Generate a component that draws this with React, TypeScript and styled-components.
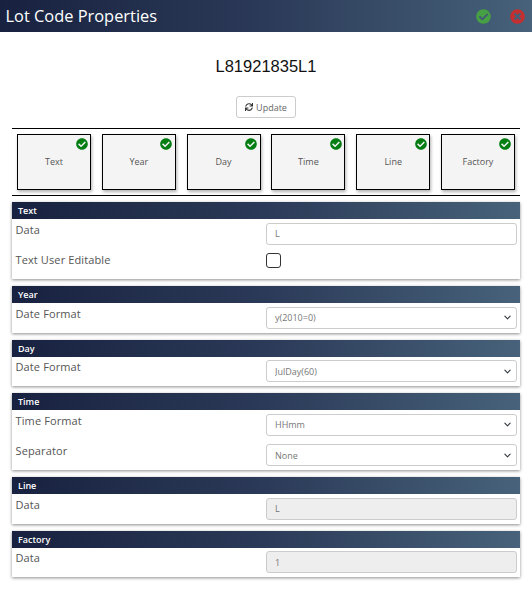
import * as React from 'react';
import styled, { createGlobalStyle } from 'styled-components';
import { FaCheckCircle, FaTimesCircle, FaSync } from 'react-icons/fa';

const barGradient = 'linear-gradient(90deg, #182240 0%, #2b3a58 50%, #47627a 100%)';
const chevron = `url("data:image/svg+xml,%3csvg xmlns='http://www.w3.org/2000/svg' viewBox='0 0 16 16'%3e%3cpath fill='none' stroke='%23343a40' stroke-linecap='round' stroke-linejoin='round' stroke-width='2.6' d='M2 5l6 6 6-6'/%3e%3c/svg%3e")`;

const GlobalStyle = createGlobalStyle`
  html, body {
    margin: 0;
    padding: 0;
    background: #fff;
    font-family: "Open Sans", sans-serif;
  }
`;

const Page = styled.div`
  width: 532px;
  height: 596px;
  overflow: hidden;
`;

const TitleBar = styled.div`
  display: flex;
  align-items: center;
  box-sizing: border-box;
  height: 32px;
  padding: 0 7px 0 5.5px;
  background: ${barGradient};
`;

const Title = styled.h1`
  flex: 1;
  margin: 0 0 2px;
  font-size: 16.4px;
  font-weight: 400;
  color: #fff;
`;

const TitleIcon = styled.span<{ $color: string }>`
  display: flex;
  margin-left: 19px;
  font-size: 15px;
  color: ${({ $color }) => $color};
`;

const Code = styled.div`
  margin-top: 24px;
  height: 20px;
  line-height: 20px;
  text-align: center;
  font-family: "Liberation Sans", Arial, sans-serif;
  font-size: 16.5px;
  color: #111;
`;

const UpdateRow = styled.div`
  display: flex;
  justify-content: center;
  margin-top: 20px;
`;

const UpdateButton = styled.button`
  display: flex;
  align-items: center;
  justify-content: center;
  gap: 3px;
  width: 60px;
  height: 22px;
  padding: 0;
  background: #fff;
  border: 1px solid #ccc;
  border-radius: 3px;
  font-family: inherit;
  font-size: 9px;
  color: #666;

  svg {
    font-size: 8px;
    color: #333;
  }
`;

const TileStrip = styled.div`
  display: flex;
  justify-content: space-between;
  box-sizing: border-box;
  height: 68px;
  margin: 10px 12px 0;
  padding: 5px 5px 0;
  border-top: 1px solid #000;
  border-bottom: 1px solid #000;
`;

const Tile = styled.div`
  position: relative;
  display: flex;
  align-items: center;
  justify-content: center;
  box-sizing: border-box;
  width: 74px;
  height: 56px;
  padding-bottom: 1px;
  background: #f4f4f4;
  border: 1.5px solid #000;
  box-shadow: 1px 2px 3px rgba(0, 0, 0, 0.3);
  font-size: 9px;
  color: #555;
`;

const TileCheck = styled.span`
  position: absolute;
  top: 3px;
  right: 2.5px;
  display: flex;
  font-size: 12px;
  color: #047d12;
`;

const PanelList = styled.div`
  display: flex;
  flex-direction: column;
  gap: 7px;
  margin: 6px 12px 0;
`;

const Panel = styled.section`
  background: #fff;
  box-shadow: 0 1px 3px rgba(0, 0, 0, 0.45);
`;

const PanelHeader = styled.div`
  height: 17px;
  line-height: 17px;
  padding-left: 6px;
  background: ${barGradient};
  font-size: 9px;
  font-weight: 600;
  color: #fff;
`;

const PanelBody = styled.div`
  display: flex;
  flex-direction: column;
  gap: 8.5px;
  padding: 3.5px 3px 4px 3.5px;
`;

const Row = styled.div`
  display: grid;
  grid-template-columns: 250.5px 251px;
  height: 22px;
`;

const Label = styled.label`
  font-size: 11px;
  line-height: 14.5px;
  letter-spacing: 0.12px;
  color: #555;
`;

const TextInput = styled.input`
  box-sizing: border-box;
  width: 251px;
  height: 22px;
  padding: 0 8px;
  border: 1px solid #ccc;
  border-radius: 3px;
  background: ${({ disabled }) => (disabled ? '#eee' : '#fff')};
  font-family: inherit;
  font-size: 9px;
  color: #777;
`;

const Select = styled.select`
  box-sizing: border-box;
  width: 251px;
  height: 22px;
  padding: 0 8px;
  appearance: none;
  border: 1px solid #ccc;
  border-radius: 3px;
  background: #fff ${chevron} no-repeat right 5px center / 7px 7px;
  font-family: inherit;
  font-size: 9px;
  color: #777;
`;

const CheckBox = styled.input`
  box-sizing: border-box;
  width: 15px;
  height: 15px;
  margin: 0;
  appearance: none;
  background: #fff;
  border: 1.5px solid #333;
  border-radius: 3px;
`;

const tiles = ['Text', 'Year', 'Day', 'Time', 'Line', 'Factory'];

const SelectField = ({ label, value }: { label: string; value: string }) => (
  <Row>
    <Label>{label}</Label>
    <Select defaultValue={value}>
      <option>{value}</option>
    </Select>
  </Row>
);

const InputField = ({ value, disabled }: { value: string; disabled?: boolean }) => (
  <Row>
    <Label>Data</Label>
    <TextInput defaultValue={value} disabled={disabled} />
  </Row>
);

const App = () => {
  return (
    <Page>
      <GlobalStyle />
      <TitleBar>
        <Title>Lot Code Properties</Title>
        <TitleIcon $color="#47a044"><FaCheckCircle /></TitleIcon>
        <TitleIcon $color="#c62f2f"><FaTimesCircle /></TitleIcon>
      </TitleBar>
      <Code>L81921835L1</Code>
      <UpdateRow>
        <UpdateButton><FaSync />Update</UpdateButton>
      </UpdateRow>
      <TileStrip>
        {tiles.map((name) => (
          <Tile key={name}>
            {name}
            <TileCheck><FaCheckCircle /></TileCheck>
          </Tile>
        ))}
      </TileStrip>
      <PanelList>
        <Panel>
          <PanelHeader>Text</PanelHeader>
          <PanelBody>
            <InputField value="L" />
            <Row>
              <Label>Text User Editable</Label>
              <CheckBox type="checkbox" />
            </Row>
          </PanelBody>
        </Panel>
        <Panel>
          <PanelHeader>Year</PanelHeader>
          <PanelBody>
            <SelectField label="Date Format" value="y(2010=0)" />
          </PanelBody>
        </Panel>
        <Panel>
          <PanelHeader>Day</PanelHeader>
          <PanelBody>
            <SelectField label="Date Format" value="JulDay(60)" />
          </PanelBody>
        </Panel>
        <Panel>
          <PanelHeader>Time</PanelHeader>
          <PanelBody>
            <SelectField label="Time Format" value="HHmm" />
            <SelectField label="Separator" value="None" />
          </PanelBody>
        </Panel>
        <Panel>
          <PanelHeader>Line</PanelHeader>
          <PanelBody>
            <InputField value="L" disabled />
          </PanelBody>
        </Panel>
        <Panel>
          <PanelHeader>Factory</PanelHeader>
          <PanelBody>
            <InputField value="1" disabled />
          </PanelBody>
        </Panel>
      </PanelList>
    </Page>
  );
};

export default App;
